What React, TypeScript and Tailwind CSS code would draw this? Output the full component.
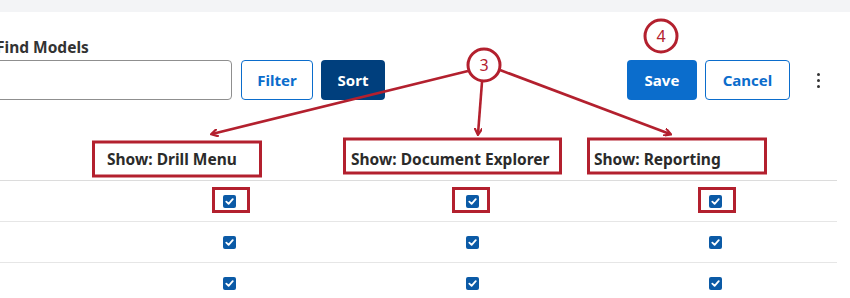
import React from 'react';

const RED = '#b3202e';

function Check() {
  return (
    <span className="inline-flex h-[13px] w-[13px] items-center justify-center rounded-[2px] bg-[#0b5aa6]">
      <svg width="9" height="9" viewBox="0 0 10 10">
        <path d="M1.5 5.2 L4 7.6 L8.6 2.4" fill="none" stroke="#fff" strokeWidth="2" strokeLinecap="round" strokeLinejoin="round" />
      </svg>
    </span>
  );
}

function Annotations() {
  return (
    <svg className="pointer-events-none absolute left-0 top-0" width="850" height="298" viewBox="0 0 850 298">
      <defs>
        <marker id="ah" markerWidth="8" markerHeight="8" refX="6" refY="4" orient="auto" markerUnits="userSpaceOnUse">
          <path d="M0 0 L7 4 L0 8" fill="none" stroke={RED} strokeWidth="2.2" />
        </marker>
      </defs>
      {/* callout 4 */}
      <circle cx="661" cy="36" r="16" fill="#fff" stroke={RED} strokeWidth="3" />
      <text x="661" y="42" textAnchor="middle" fontSize="16" fill={RED} fontFamily="'Noto Sans', sans-serif">4</text>

      {/* callout 3 arrows */}
      <line x1="468" y1="71" x2="212" y2="134" stroke={RED} strokeWidth="2.6" markerEnd="url(#ah)" />
      <line x1="482" y1="82" x2="478" y2="134" stroke={RED} strokeWidth="2.6" markerEnd="url(#ah)" />
      <line x1="500" y1="70" x2="670" y2="134" stroke={RED} strokeWidth="2.6" markerEnd="url(#ah)" />
      <circle cx="484" cy="65" r="16" fill="#fff" stroke={RED} strokeWidth="3" />
      <text x="484" y="71" textAnchor="middle" fontSize="16" fill={RED} fontFamily="'Noto Sans', sans-serif">3</text>

      {/* header boxes */}
      <rect x="93.5" y="142" width="167" height="34" fill="none" stroke={RED} strokeWidth="3" />
      <rect x="344.5" y="139" width="216" height="34" fill="none" stroke={RED} strokeWidth="3" />
      <rect x="588.5" y="139" width="177" height="34" fill="none" stroke={RED} strokeWidth="3" />

      {/* checkbox boxes */}
      <rect x="213.5" y="188.5" width="35" height="23" fill="none" stroke={RED} strokeWidth="3" />
      <rect x="453.5" y="188.5" width="35" height="23" fill="none" stroke={RED} strokeWidth="3" />
      <rect x="699.5" y="188.5" width="35" height="23" fill="none" stroke={RED} strokeWidth="3" />
    </svg>
  );
}

export default function App() {
  const cols = ['Show: Drill Menu', 'Show: Document Explorer', 'Show: Reporting'];
  const rows = [0, 1, 2];

  return (
    <div className="relative h-[298px] w-[850px] overflow-hidden bg-white text-[#2b2b2b]" style={{ fontFamily: "'Noto Sans', sans-serif" }}>
      <div className="h-[12px] bg-[#f3f4f6]" />

      {/* Toolbar */}
      <div className="flex items-end pt-[25px]">
        <div className="-ml-[4px]">
          <div className="mb-[3px] h-[20px] text-[15.5px] font-bold leading-[20px] text-[#333]">Find Models</div>
          <div className="flex items-center">
            <div className="-ml-[10px] h-[40px] w-[246px] rounded-[4px] border border-[#8f8f8f]" />
            <button className="ml-[9px] h-[40px] w-[72px] rounded-[4px] border border-[#0b6dcc] bg-white text-[15px] font-bold text-[#0b6dcc]">Filter</button>
            <button className="ml-[8px] h-[40px] w-[64px] rounded-[4px] bg-[#003f7d] text-[15px] font-bold text-white">Sort</button>
          </div>
        </div>
        <div className="ml-auto flex items-center pr-[30px]">
          <button className="h-[40px] w-[70px] rounded-[4px] bg-[#0b6dcc] text-[15px] font-bold text-white">Save</button>
          <button className="ml-[8px] h-[40px] w-[85px] rounded-[4px] border border-[#0b6dcc] bg-white text-[15px] font-bold text-[#0b6dcc]">Cancel</button>
          <div className="ml-[26px] flex w-[4px] flex-col items-center gap-[3px]">
            <span className="h-[3px] w-[3px] rounded-full bg-[#333]" />
            <span className="h-[3px] w-[3px] rounded-full bg-[#333]" />
            <span className="h-[3px] w-[3px] rounded-full bg-[#333]" />
          </div>
        </div>
      </div>

      {/* Table */}
      <div className="mt-[40px] w-[837px]">
        <div className="grid h-[41px] grid-cols-[107px_244px_243px_243px] items-center border-b border-[#dcdcdc]">
          <div />
          {cols.map((c) => (
            <div key={c} className="text-[15.5px] font-bold text-[#2b2b2b]">{c}</div>
          ))}
        </div>
        {rows.map((r) => (
          <div key={r} className="grid h-[41px] grid-cols-[108px_243px_243px_243px] items-center border-b border-[#e6e6e6]">
            <div />
            {cols.map((c) => (
              <div key={c} className="flex justify-center">
                <Check />
              </div>
            ))}
          </div>
        ))}
      </div>

      <Annotations />
    </div>
  );
}
